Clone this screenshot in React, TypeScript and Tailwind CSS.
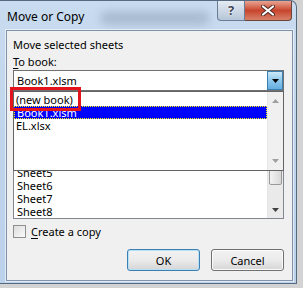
import React from "react";

const Tri = ({ up = false, color = "#000" }: { up?: boolean; color?: string }) => (
  <svg width="7" height="4" viewBox="0 0 7 4">
    <path d={up ? "M3.5 0L7 4H0Z" : "M0 0H7L3.5 4Z"} fill={color} />
  </svg>
);

// list is scrolled to the end, only the last rows show under the open dropdown
const sheets = ["Sheet5", "Sheet6", "Sheet7", "Sheet8"];

const App = () => {
  return (
    <div className="w-[303px] h-[288px] bg-[#d3d3d3] overflow-hidden font-['Segoe_UI','Noto_Sans',sans-serif] text-black">
      <div className="w-[297px] h-[284px] rounded-tr-[7px] border-t border-r border-b border-[#566a82] bg-gradient-to-b from-[#c9dbef] via-[#bfd4eb] to-[#bcd2ea] flex flex-col relative">
        {/* blurred content behind the glass frame */}
        <div className="absolute left-[100px] top-[10px] w-[110px] h-[14px] rounded-full bg-[#7d8fa6] opacity-40 blur-[4px]" />
        <div className="h-[29px] flex items-start relative">
          <span className="pl-[7px] pt-[7px] text-[12px] leading-[17px]">Move or Copy</span>
          <div className="ml-auto mr-[4px] flex">
            <div className="w-[28px] h-[20px] rounded-bl-[4px] border border-t-0 border-[#6a7d95] bg-gradient-to-b from-[#e4ebf3] via-[#cdd8e5] to-[#b6c6d8] flex items-center justify-center">
              <span className="text-[13px] font-bold text-[#3c4654] leading-none [text-shadow:0_0_2px_#fff,0_0_1px_#fff]">?</span>
            </div>
            <div className="w-[47px] h-[20px] rounded-br-[4px] border border-l-0 border-t-0 border-[#6a4438] bg-gradient-to-b from-[#e8a493] via-[#c8432b] to-[#d6806a] flex items-center justify-center">
              <svg width="14" height="11" viewBox="0 0 14 11">
                <path d="M2 1.5L12 9.5M12 1.5L2 9.5" stroke="#4a2a24" strokeWidth="4" strokeLinecap="round" />
                <path d="M2 1.5L12 9.5M12 1.5L2 9.5" stroke="#fff" strokeWidth="2.2" strokeLinecap="round" />
              </svg>
            </div>
          </div>
        </div>
        <div className="ml-[6px] w-[287px] h-[251px] border border-[#8193aa] bg-[#f0f0f0] shadow-[0_0_0_1px_rgba(255,255,255,0.55)] pl-[6px] pr-[8px] pt-[5px] flex flex-col relative text-[11px]">
          <div className="leading-[17px]">Move selected sheets</div>
          <div className="leading-[17px]">
            <span className="underline underline-offset-2">T</span>o book:
          </div>
          <div className="h-[21px] border border-[#707070] bg-white flex">
            <div className="flex-1 pl-[3px] flex items-center leading-none">Book1.xlsm</div>
            <div className="w-[16px] border border-[#3c7fb1] bg-gradient-to-b from-[#cde8f8] via-[#8ec8ec] to-[#64aee0] flex items-center justify-center">
              <Tri />
            </div>
          </div>
          <div className="h-[19px]" />
          <div className="h-[109px] border border-[#828790] bg-white flex">
            <div className="flex-1 overflow-hidden flex flex-col justify-end pl-[3px]">
              {sheets.map((s) => (
                <div key={s} className="h-[13px] leading-[13px] shrink-0">
                  {s}
                </div>
              ))}
            </div>
            <div className="w-[16px] bg-[#eaeaea] border-l border-[#e4e4e4] flex flex-col items-stretch">
              <div className="h-[17px] flex items-center justify-center">
                <Tri up color="#606060" />
              </div>
              <div className="flex-1" />
              <div className="h-[16px] mx-[1px] rounded-[2px] border border-[#9a9a9a] bg-gradient-to-r from-[#f2f2f2] to-[#d8d8d8]" />
              <div className="h-[16px]" />
              <div className="h-[17px] flex items-center justify-center">
                <Tri color="#404040" />
              </div>
            </div>
          </div>
          <div className="mt-[6px] flex items-center gap-[5px] h-[13px]">
            <div className="w-[13px] h-[13px] border border-[#8e8f8f] bg-gradient-to-br from-[#dcdcdc] to-[#fbfbfb]" />
            <span className="leading-none">
              <span className="underline underline-offset-2">C</span>reate a copy
            </span>
          </div>
          <div className="mt-[11px] flex justify-end gap-[11px]">
            <button className="w-[73px] h-[22px] rounded-[3px] border border-[#3c7fb1] bg-gradient-to-b from-[#f2f2f2] via-[#ebebeb] to-[#d5d5d5] shadow-[inset_0_0_0_1px_#b6e0f6] leading-none">
              OK
            </button>
            <button className="w-[73px] h-[22px] rounded-[3px] border border-[#707070] bg-gradient-to-b from-[#f2f2f2] via-[#ebebeb] to-[#d5d5d5] shadow-[inset_0_0_0_1px_#fbfbfb] leading-none">
              Cancel
            </button>
          </div>

          {/* open dropdown list */}
          <div className="absolute left-[6px] top-[60px] w-[271px] h-[80px] border border-[#646464] bg-white flex">
            <div className="flex-1 pt-[1px]">
              <div className="h-[13px] leading-[13px] pl-[2px]">(new book)</div>
              <div className="h-[13px] leading-[12px] pl-[2px] bg-[#0000ff] text-white border border-dotted border-[#ffff00]">Book1.xlsm</div>
              <div className="h-[13px] leading-[13px] pl-[2px]">EL.xlsx</div>
            </div>
            <div className="w-[16px] bg-[#f0f0f0] border-l border-[#e6e6e6] flex flex-col justify-between py-[7px] items-center">
              <Tri up color="#a0a0a0" />
              <Tri color="#a0a0a0" />
            </div>
          </div>
          {/* red highlight frame */}
          <div className="absolute left-[3px] top-[56px] w-[71px] h-[24px] border-[3px] border-[#e3141c]" />
        </div>
      </div>
    </div>
  );
};

export default App;
